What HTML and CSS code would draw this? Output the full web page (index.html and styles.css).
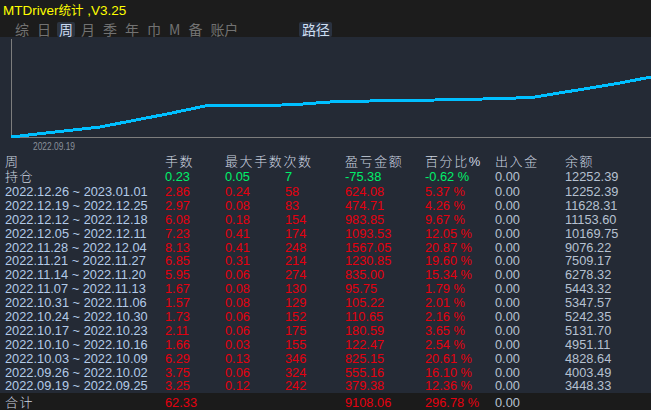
FILE: index.html
```html
<!DOCTYPE html>
<html lang="zh">
<head>
<meta charset="utf-8">
<title>MTDriver统计</title>
<link rel="stylesheet" href="styles.css">
</head>
<body>
<div class="app">
  <div class="title">MTDriver<span class="cjk">统计</span> ,V3.25</div>
  <div class="tabs">
    <span class="tab">综</span>
    <span class="tab">日</span>
    <span class="tab active">周</span>
    <span class="tab">月</span>
    <span class="tab">季</span>
    <span class="tab">年</span>
    <span class="tab">巾</span>
    <span class="tab">M</span>
    <span class="tab">备</span>
    <span class="tab">账户</span>
    <span class="tab path">路径</span>
  </div>
  <div class="panel">
    <svg class="chart" width="651" height="117" viewBox="0 0 651 117">
      <line x1="11.5" y1="2" x2="11.5" y2="101" class="axis"/>
      <line x1="11" y1="100.5" x2="651" y2="100.5" class="axis"/>
      <polyline class="curve" points="11,100 33,97.5 100,90 167,77 205,69 238,68.5 282,68 303,67 330,65 370,64 435,63 483,62 516,61 535,60 553,57 587,51.5 620,46 651,40"/>
      <text x="33" y="112.5" class="axis-label" textLength="42" lengthAdjust="spacingAndGlyphs">2022.09.19</text>
    </svg>
    <div class="table">
      <div class="row head">
        <span>周</span><span>手数</span><span class="span2">最大手数次数</span><span>盈亏金额</span><span>百分比%</span><span>出入金</span><span>余额</span>
      </div>
      <div class="row hold">
        <span class="lbl">持仓</span><span class="g">0.23</span><span class="g">0.05</span><span class="g">7</span><span class="g">-75.38</span><span class="g">-0.62 %</span><span class="n">0.00</span><span class="n">12252.39</span>
      </div>
      <div class="row"><span class="d">2022.12.26 ~ 2023.01.01</span><span class="r">2.86</span><span class="r">0.24</span><span class="r">58</span><span class="r">624.08</span><span class="r">5.37 %</span><span class="n">0.00</span><span class="n">12252.39</span></div>
      <div class="row"><span class="d">2022.12.19 ~ 2022.12.25</span><span class="r">2.97</span><span class="r">0.08</span><span class="r">83</span><span class="r">474.71</span><span class="r">4.26 %</span><span class="n">0.00</span><span class="n">11628.31</span></div>
      <div class="row"><span class="d">2022.12.12 ~ 2022.12.18</span><span class="r">6.08</span><span class="r">0.18</span><span class="r">154</span><span class="r">983.85</span><span class="r">9.67 %</span><span class="n">0.00</span><span class="n">11153.60</span></div>
      <div class="row"><span class="d">2022.12.05 ~ 2022.12.11</span><span class="r">7.23</span><span class="r">0.41</span><span class="r">174</span><span class="r">1093.53</span><span class="r">12.05 %</span><span class="n">0.00</span><span class="n">10169.75</span></div>
      <div class="row"><span class="d">2022.11.28 ~ 2022.12.04</span><span class="r">8.13</span><span class="r">0.41</span><span class="r">248</span><span class="r">1567.05</span><span class="r">20.87 %</span><span class="n">0.00</span><span class="n">9076.22</span></div>
      <div class="row"><span class="d">2022.11.21 ~ 2022.11.27</span><span class="r">6.85</span><span class="r">0.31</span><span class="r">214</span><span class="r">1230.85</span><span class="r">19.60 %</span><span class="n">0.00</span><span class="n">7509.17</span></div>
      <div class="row"><span class="d">2022.11.14 ~ 2022.11.20</span><span class="r">5.95</span><span class="r">0.06</span><span class="r">274</span><span class="r">835.00</span><span class="r">15.34 %</span><span class="n">0.00</span><span class="n">6278.32</span></div>
      <div class="row"><span class="d">2022.11.07 ~ 2022.11.13</span><span class="r">1.67</span><span class="r">0.08</span><span class="r">130</span><span class="r">95.75</span><span class="r">1.79 %</span><span class="n">0.00</span><span class="n">5443.32</span></div>
      <div class="row"><span class="d">2022.10.31 ~ 2022.11.06</span><span class="r">1.57</span><span class="r">0.08</span><span class="r">129</span><span class="r">105.22</span><span class="r">2.01 %</span><span class="n">0.00</span><span class="n">5347.57</span></div>
      <div class="row"><span class="d">2022.10.24 ~ 2022.10.30</span><span class="r">1.73</span><span class="r">0.06</span><span class="r">152</span><span class="r">110.65</span><span class="r">2.16 %</span><span class="n">0.00</span><span class="n">5242.35</span></div>
      <div class="row"><span class="d">2022.10.17 ~ 2022.10.23</span><span class="r">2.11</span><span class="r">0.06</span><span class="r">175</span><span class="r">180.59</span><span class="r">3.65 %</span><span class="n">0.00</span><span class="n">5131.70</span></div>
      <div class="row"><span class="d">2022.10.10 ~ 2022.10.16</span><span class="r">1.66</span><span class="r">0.03</span><span class="r">155</span><span class="r">122.47</span><span class="r">2.54 %</span><span class="n">0.00</span><span class="n">4951.11</span></div>
      <div class="row"><span class="d">2022.10.03 ~ 2022.10.09</span><span class="r">6.29</span><span class="r">0.13</span><span class="r">346</span><span class="r">825.15</span><span class="r">20.61 %</span><span class="n">0.00</span><span class="n">4828.64</span></div>
      <div class="row"><span class="d">2022.09.26 ~ 2022.10.02</span><span class="r">3.75</span><span class="r">0.06</span><span class="r">324</span><span class="r">555.16</span><span class="r">16.10 %</span><span class="n">0.00</span><span class="n">4003.49</span></div>
      <div class="row"><span class="d">2022.09.19 ~ 2022.09.25</span><span class="r">3.25</span><span class="r">0.12</span><span class="r">242</span><span class="r">379.38</span><span class="r">12.36 %</span><span class="n">0.00</span><span class="n">3448.33</span></div>
    </div>
  </div>
  <div class="total">
    <div class="row">
      <span class="lbl">合计</span><span class="r">62.33</span><span></span><span></span><span class="r">9108.06</span><span class="r">296.78 %</span><span class="n">0.00</span><span></span>
    </div>
  </div>
</div>
</body>
</html>
```
FILE: styles.css
```css
html, body {
  margin: 0;
  padding: 0;
  background: #1c1c1c;
}
.app {
  width: 651px;
  height: 410px;
  overflow: hidden;
  background: #1c1c1c;
  font-family: "Liberation Sans", "Noto Sans CJK SC", sans-serif;
  display: flex;
  flex-direction: column;
}
.title {
  height: 22px;
  line-height: 22px;
  padding-left: 3px;
  font-size: 13.5px;
  color: #ffff00;
  white-space: nowrap;
}
.title .cjk {
  font-size: 12.5px;
}
.tabs {
  height: 17px;
  display: flex;
  align-items: center;
  gap: 4px;
  padding-left: 13px;
  font-family: "Noto Sans CJK SC", sans-serif;
  font-size: 14px;
  font-weight: 400;
  color: #727272;
}
.tab {
  padding: 0 2px;
  height: 15px;
  line-height: 15px;
  border-radius: 2px;
}
.tab.active {
  background: #2c3440;
  color: #c9d9ef;
}
.tab.path {
  margin-left: 55px;
  padding: 0 2.5px;
  background: #2a3240;
  color: #cfdff2;
}
.panel {
  background: #242a35;
  flex: 0 0 auto;
}
.chart {
  display: block;
}
.axis {
  stroke: #7d7d7d;
  stroke-width: 1;
  shape-rendering: crispEdges;
}
.curve {
  fill: none;
  stroke: #00bfff;
  stroke-width: 3;
  shape-rendering: crispEdges;
}
.axis-label {
  font-family: "Liberation Sans", sans-serif;
  font-size: 11.5px;
  fill: #8a909a;
}
.table {
  padding-left: 5px;
}
.row {
  display: grid;
  grid-template-columns: 160px 60px 60px 60px 80px 70px 70px 1fr;
  font-size: 12.8px;
  line-height: 13.9px;
  height: 13.9px;
  white-space: nowrap;
  color: #b6c1d1;
}
.row.head {
  font-size: 13px;
  height: 15px;
  line-height: 15px;
  color: #cdd5e0;
  font-weight: 300;
  letter-spacing: 1.6px;
}
.row.hold {
  height: 16px;
  line-height: 16px;
}
.span2 {
  grid-column: span 2;
}
.lbl {
  font-size: 13px;
  letter-spacing: 1.5px;
  color: #cdd5e0;
  font-weight: 300;
}
.d { color: #b3cbe8; }
.g { color: #00ef6a; }
.r { color: #e5000f; }
.n { color: #b6c1d1; }
.total {
  flex: 1;
  padding-left: 5px;
  padding-top: 3px;
  background: #1b1b1b;
  border-bottom: 1px solid #4a4a4a;
}
```
